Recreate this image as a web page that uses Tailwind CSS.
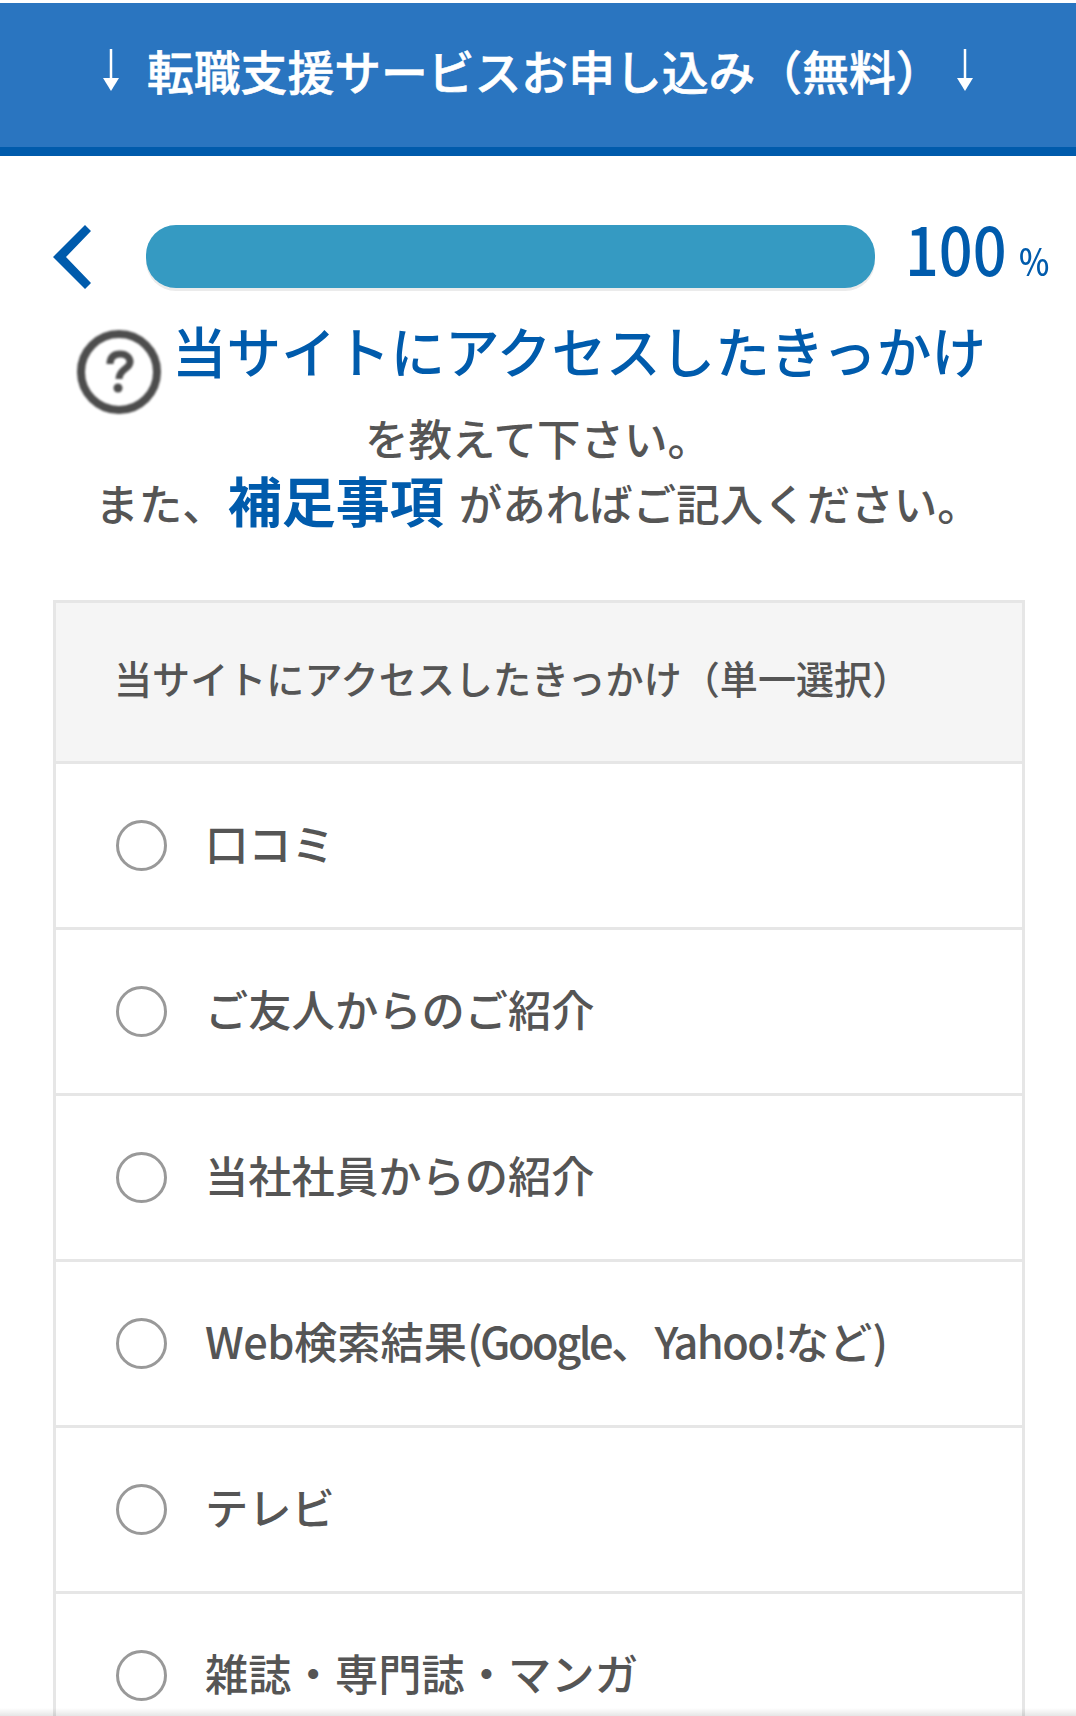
<!DOCTYPE html>
<html lang="ja">
<head>
    <meta charset="UTF-8">
    <meta name="viewport" content="width=device-width, initial-scale=1.0">
    <title>転職支援サービスお申し込み</title>
    <script src="https://cdn.jsdelivr.net/npm/@tailwindcss/browser@4"></script>
</head>
<body class="relative h-[1716px] overflow-hidden bg-white text-[#555] font-medium font-['Noto_Sans_CJK_JP','Noto_Sans',sans-serif]">

    <!-- top bar -->
    <div class="mt-[3px] h-[153px] pb-[10px] bg-[#2a75c0] border-b-[9px] border-[#005bac] flex items-center justify-center text-white text-[46.8px] leading-none [-webkit-text-stroke:0.6px_white]">
        <span class="w-[16px] mr-[28px] flex justify-center">
            <svg width="16" height="42" viewBox="0 0 16 42"><path d="M8 0V31" stroke="#fff" stroke-width="2.5" fill="none"/><path d="M0 29H16L8 42Z" fill="#fff"/></svg>
        </span>
        <span class="w-[810px] whitespace-nowrap">転職支援サービスお申し込み（無料）</span>
        <span class="w-[16px] flex justify-center">
            <svg width="16" height="42" viewBox="0 0 16 42"><path d="M8 0V31" stroke="#fff" stroke-width="2.5" fill="none"/><path d="M0 29H16L8 42Z" fill="#fff"/></svg>
        </span>
    </div>

    <!-- progress -->
    <div class="mt-[69px] flex items-center h-[64px] pl-[53px]">
        <svg width="38" height="64" viewBox="0 0 38 64" class="shrink-0"><path d="M32 0L38 6L13 32L38 58L32 64L0 32Z" fill="#005bac"/></svg>
        <div class="ml-[55px] w-[729px] h-[63px] self-start rounded-[30px] bg-[#359ac2] shadow-[0_3px_0_#ebebeb]"></div>
        <div class="ml-[30px] pb-[20px] flex items-baseline text-[#005bac] leading-none">
            <span class="w-[95px] text-[66px] whitespace-nowrap scale-x-[0.9] origin-left">100</span>
            <span class="ml-[19px] text-[38px] scale-x-[0.85] origin-left">%</span>
        </div>
    </div>

    <!-- heading -->
    <div class="mt-[30px] flex items-start pl-[76px]">
        <svg width="86" height="86" viewBox="0 0 86 86" class="mt-[10px] shrink-0 blur-[1px]">
            <circle cx="43" cy="43" r="38" stroke="#4d4d4d" stroke-width="8" fill="#fff"/>
            <path d="M34 35C34 28 38 25 44 25C51 25 54 29 54 33C54 40 43 40 43 50" stroke="#4d4d4d" stroke-width="7" fill="none"/>
            <circle cx="42" cy="59" r="4.5" fill="#4d4d4d"/>
        </svg>
        <span class="ml-[10px] mt-[-4px] text-[54.6px] leading-[70px] text-[#005bac] whitespace-nowrap">当サイトにアクセスしたきっかけ</span>
    </div>
    <p class="mt-[-10px] text-center text-[43.5px] leading-[66px]">を教えて下さい。</p>
    <p class="text-center text-[43.5px] leading-[60px] whitespace-nowrap">また、<span class="relative top-[2px] ml-[2px] mr-[5px] text-[54px] font-bold leading-none text-[#005bac]">補足事項</span> があればご記入ください。</p>

    <!-- question table -->
    <div class="mt-[67px] ml-[53px] w-[972px] border-[3px] border-b-0 border-[#e6e6e6]">
        <div class="h-[161px] pb-[9px] bg-[#f5f5f5] border-b-[3px] border-[#e6e6e6] flex items-center pl-[58px] text-[38.1px] whitespace-nowrap">当サイトにアクセスしたきっかけ（単一選択）</div>
        <div class="h-[166px] border-b-[3px] border-[#e6e6e6] flex items-center pl-[60px] text-[43.3px] whitespace-nowrap">
            <span class="w-[51px] h-[51px] rounded-full border-[3px] border-[#999] mr-[38px] shrink-0"></span><span class="mt-[-6px]">口コミ</span>
        </div>
        <div class="h-[166px] border-b-[3px] border-[#e6e6e6] flex items-center pl-[60px] text-[43.3px] whitespace-nowrap">
            <span class="w-[51px] h-[51px] rounded-full border-[3px] border-[#999] mr-[38px] shrink-0"></span><span class="mt-[-6px]">ご友人からのご紹介</span>
        </div>
        <div class="h-[166px] border-b-[3px] border-[#e6e6e6] flex items-center pl-[60px] text-[43.3px] whitespace-nowrap">
            <span class="w-[51px] h-[51px] rounded-full border-[3px] border-[#999] mr-[38px] shrink-0"></span><span class="mt-[-6px]">当社社員からの紹介</span>
        </div>
        <div class="h-[166px] border-b-[3px] border-[#e6e6e6] flex items-center pl-[60px] text-[43.3px] whitespace-nowrap">
            <span class="w-[51px] h-[51px] rounded-full border-[3px] border-[#999] mr-[38px] shrink-0"></span><span class="mt-[-6px]"><span class="tracking-[-0.5px]">Web</span>検索結果<span class="tracking-[-2.5px]">(Google</span>、<span class="tracking-[-1.5px]">Yahoo!</span>など)</span>
        </div>
        <div class="h-[166px] border-b-[3px] border-[#e6e6e6] flex items-center pl-[60px] text-[43.3px] whitespace-nowrap">
            <span class="w-[51px] h-[51px] rounded-full border-[3px] border-[#999] mr-[38px] shrink-0"></span><span class="mt-[-6px]">テレビ</span>
        </div>
        <div class="h-[166px] border-b-[3px] border-[#e6e6e6] flex items-center pl-[60px] text-[43.3px] whitespace-nowrap">
            <span class="w-[51px] h-[51px] rounded-full border-[3px] border-[#999] mr-[38px] shrink-0"></span><span class="mt-[-6px]">雑誌・専門誌・マンガ</span>
        </div>
    </div>

    <!-- fade at the fold -->
    <div class="absolute bottom-0 left-0 right-0 h-[8px] bg-gradient-to-b from-transparent to-black/10"></div>

</body>
</html>
